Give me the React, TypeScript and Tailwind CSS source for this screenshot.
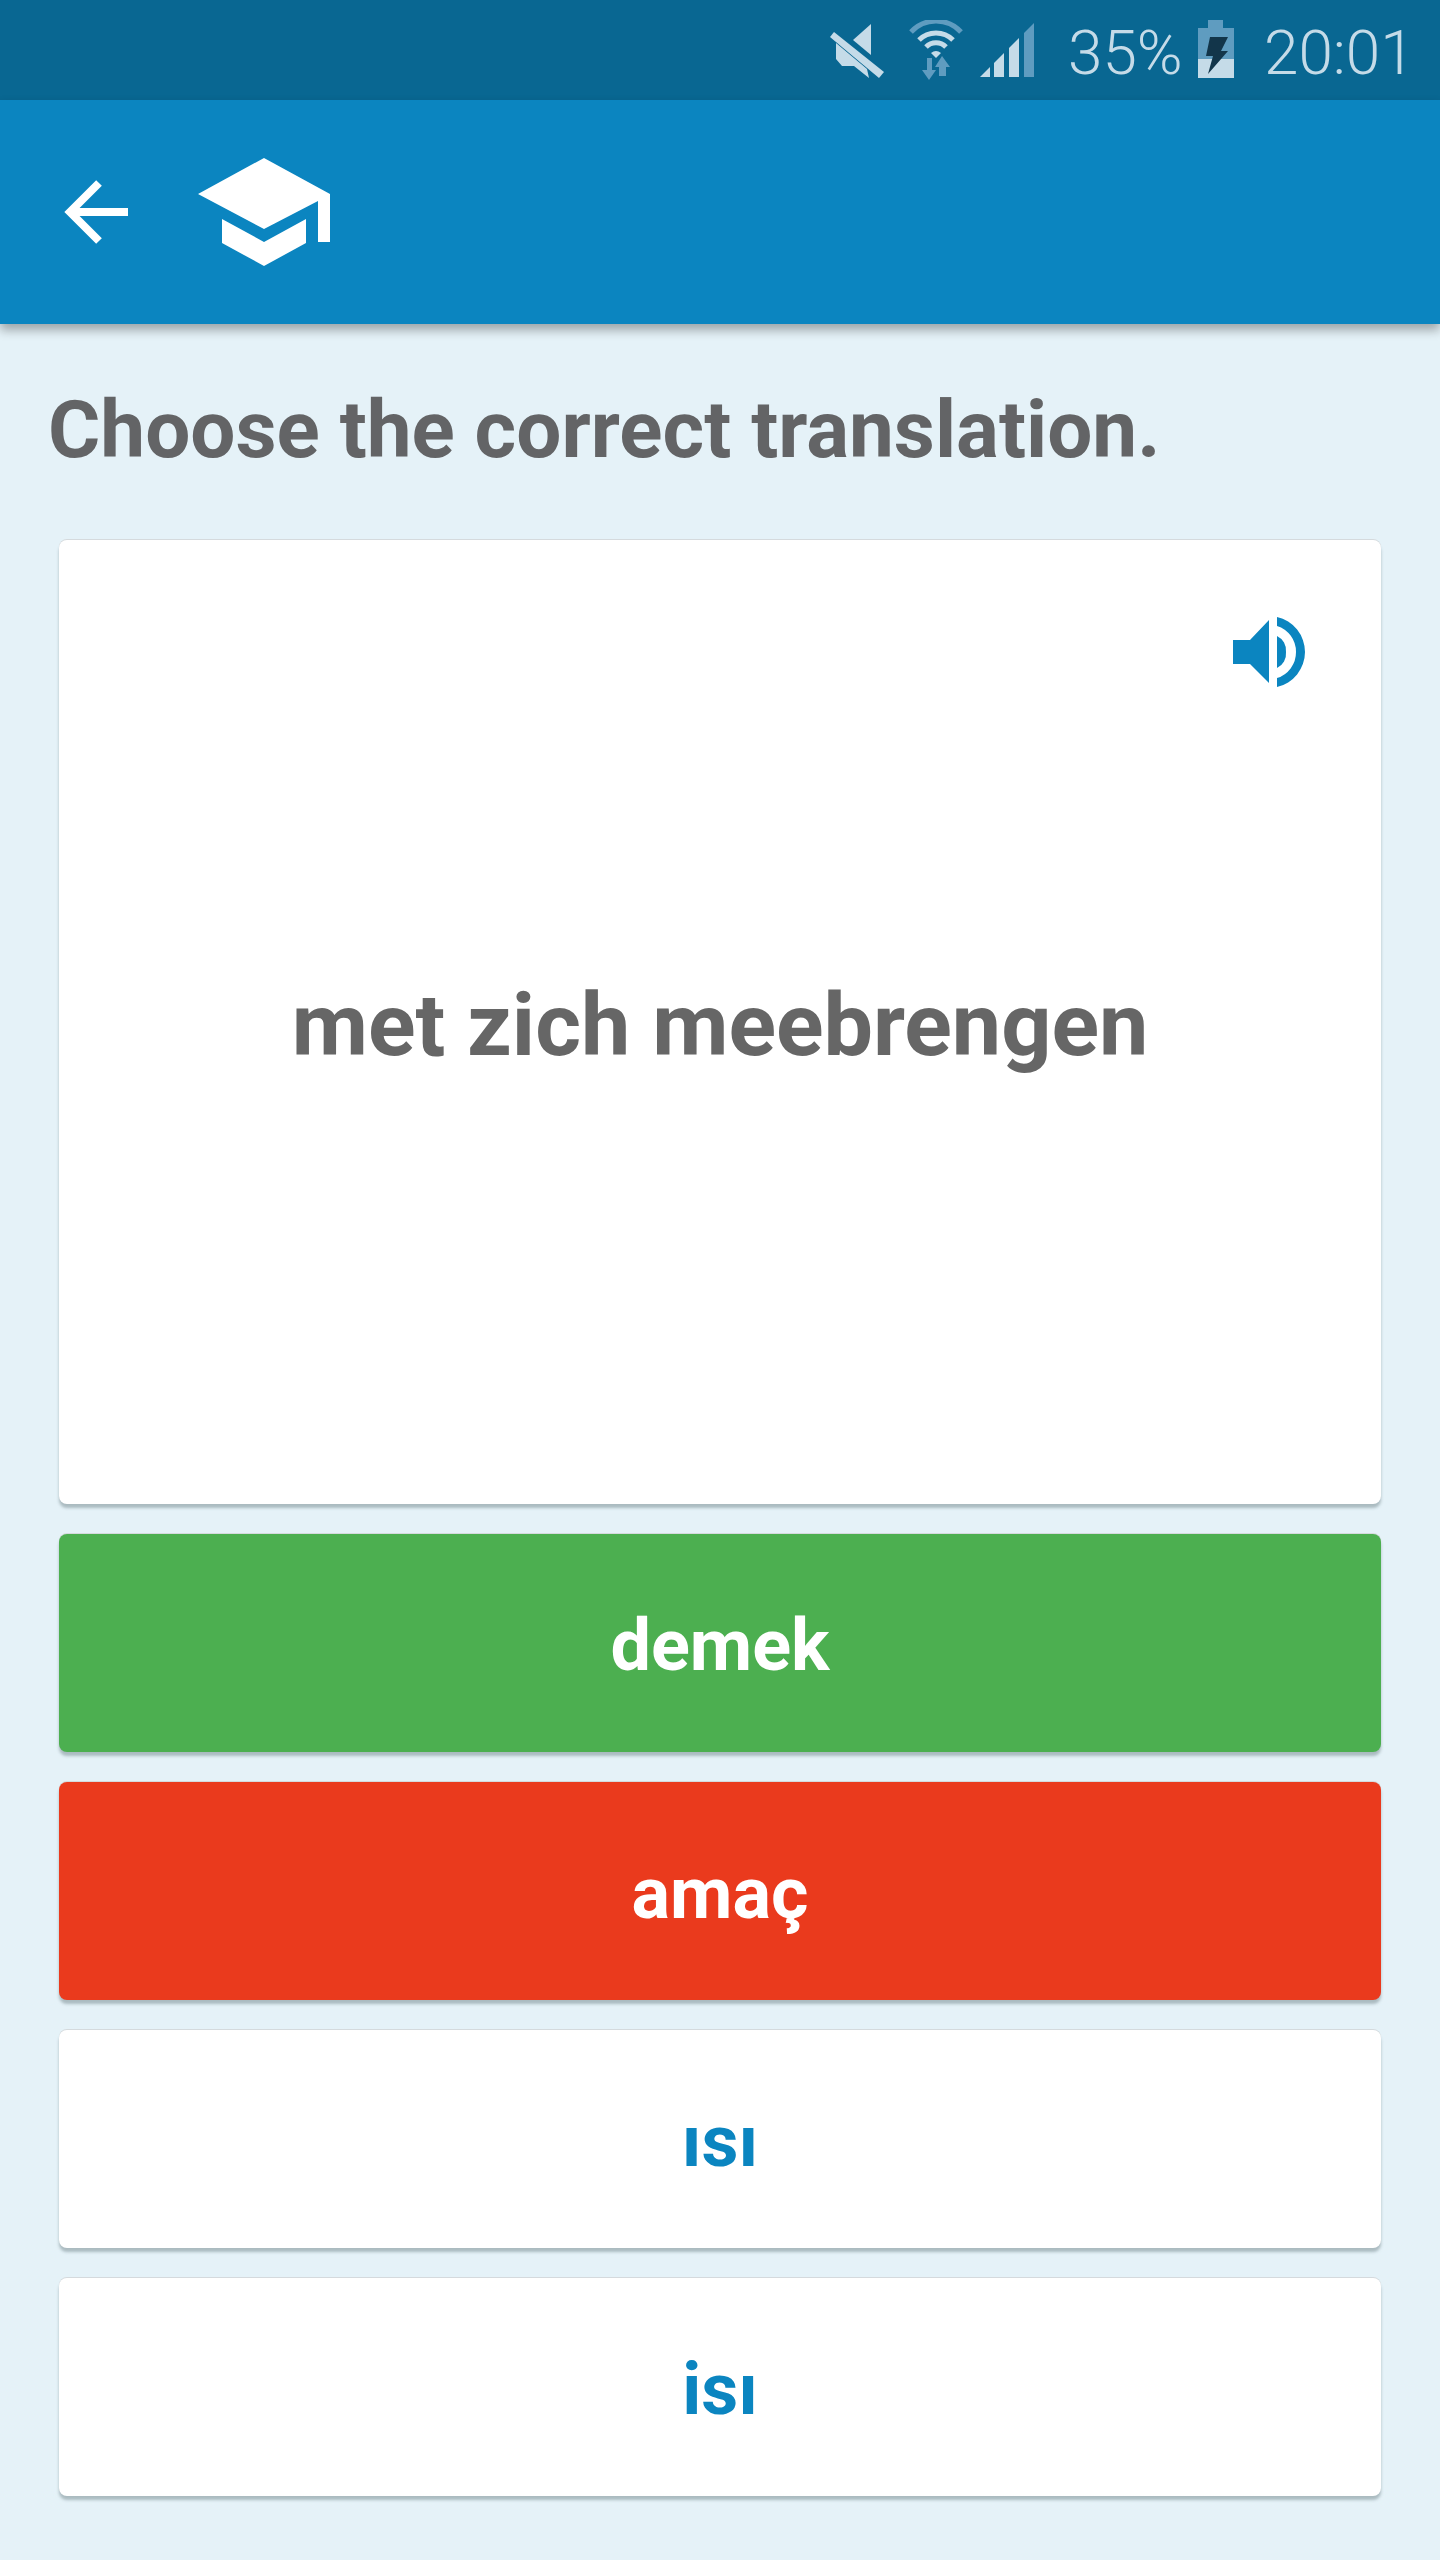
function StatusIcons() {
  return (
    <>
      {/* mute */}
      <svg className="absolute left-[830px] top-[23px]" width="54" height="56" viewBox="0 0 54 56">
        <path d="M4 9 L0 14 L49 55 L54 49 Z" fill="#c5dbe8" />
        <path d="M6 20 L37 46 L39 55 L24 43 H12 L6 36 Z" fill="#c5dbe8" />
        <path d="M41 1 V32 L23 17 Z" fill="#c5dbe8" />
      </svg>
      {/* wifi */}
      <svg className="absolute left-[908px] top-[20px]" width="56" height="60" viewBox="0 0 56 60">
        <path d="M3 12 A34 34 0 0 1 53 12" fill="none" stroke="#5f9cc0" strokeWidth="5" />
        <path d="M11 20 A24 24 0 0 1 45 20" fill="none" stroke="#c5dbe8" strokeWidth="5" />
        <path d="M18 27 A14 14 0 0 1 38 27" fill="none" stroke="#c5dbe8" strokeWidth="5" />
        <path d="M23 33 A8 8 0 0 1 33 33 L28 38 Z" fill="#c5dbe8" />
        <path d="M19 38 H24 V50 H28 L21 60 L14 50 H19 Z" fill="#5f9cc0" />
        <path d="M34 36 L42 47 H38 V56 H31 V47 H27 Z" fill="#5f9cc0" />
      </svg>
      {/* signal */}
      <svg className="absolute left-[980px] top-[23px]" width="54" height="54" viewBox="0 0 54 54">
        <path d="M0 54 L10 44 V54 Z" fill="#c5dbe8" />
        <path d="M14 54 V40 L24 30 V54 Z" fill="#c5dbe8" />
        <path d="M29 54 V25 L39 15 V54 Z" fill="#c5dbe8" />
        <path d="M44 54 V10 L54 0 V54 Z" fill="#5f9cc0" />
      </svg>
      {/* battery */}
      <svg className="absolute left-[1198px] top-[20px]" width="36" height="58" viewBox="0 0 36 58">
        <path d="M10 0 H25 V8 H36 V58 H0 V8 H10 Z" fill="#5f9cc0" />
        <rect x="0" y="39" width="36" height="19" fill="#c5dbe8" />
        <path d="M12 17 H30 L23 31 H30 L10 54 L15 36 H8 Z" fill="#12354a" />
      </svg>
    </>
  );
}

function CapIcon() {
  return (
    <svg width="132" height="108" viewBox="0 0 132 108" fill="white">
      <path d="M66 0 L132 36 V84 H120 V43 L66 71 L0 36 Z" />
      <path d="M24 61 L66 84 L108 61 V85 L66 108 L24 85 Z" />
    </svg>
  );
}

function SpeakerIcon() {
  return (
    <svg width="72" height="70" viewBox="0 0 72 70" fill="#0b85c0">
      <path d="M0 23 H17 L36 3 V66 L17 47 H0 Z" />
      <path d="M44 0 A36 36 0 0 1 72 35 A36 36 0 0 1 44 70 V61 A27 27 0 0 0 63 35 A27 27 0 0 0 44 9 Z" />
      <path d="M44 19 A16 16 0 0 1 53 35 A16 16 0 0 1 44 51 Z" />
    </svg>
  );
}

const answers = [
  { label: "demek", className: "bg-[#4caf50] text-white" },
  { label: "amaç", className: "bg-[#ea3a1d] text-white" },
  { label: "ısı", className: "bg-white text-[#0b85c0]" },
  { label: "isı", className: "bg-white text-[#0b85c0]" },
];

export default function App() {
  return (
    <div className="relative h-[2560px] w-[1440px] overflow-hidden bg-[#e5f2f8] font-['Roboto',sans-serif]">
      <div className="h-[100px] bg-[#096792]">
        <StatusIcons />
        <div className="flex h-full items-center pt-[6px] text-[62px] font-light leading-none text-[#c5dbe8]">
          <span className="ml-[1068px] w-[196px]">35%</span>
          <span>20:01</span>
        </div>
      </div>

      <div className="relative flex h-[224px] items-center bg-[#0b85c0] pl-[64px] shadow-[0_6px_10px_rgba(0,0,0,0.32)]">
        <svg width="64" height="64" viewBox="0 0 64 64" fill="none" stroke="white" strokeWidth="8">
          <path d="M64 32 H6" />
          <path d="M35 3 L6 32 L35 61" />
        </svg>
        <div className="ml-[70px]">
          <CapIcon />
        </div>
      </div>

      <h1 className="mt-[66px] pl-[48px] text-[80px] font-bold leading-[80px] text-[#636466]">
        Choose the correct translation.
      </h1>

      <div className="mx-[59px] mt-[72px] flex flex-col gap-[30px]">
        <div className="relative mt-[-2px] flex h-[964px] items-center justify-center rounded-lg bg-white shadow-[0_4px_3px_rgba(100,120,125,0.45),0_-1px_0_#d5dadd]">
          <div className="absolute right-[76px] top-[77px]">
            <SpeakerIcon />
          </div>
          <span className="pt-[6px] text-[88px] font-bold text-[#666666]">met zich meebrengen</span>
        </div>
        {answers.map((a) => (
          <div
            key={a.label}
            className={`flex h-[218px] items-center justify-center rounded-lg pt-[5px] text-[72px] font-bold shadow-[0_4px_3px_rgba(100,120,125,0.45),0_-1px_0_#d5dadd] ${a.className}`}
          >
            {a.label}
          </div>
        ))}
      </div>
    </div>
  );
}
